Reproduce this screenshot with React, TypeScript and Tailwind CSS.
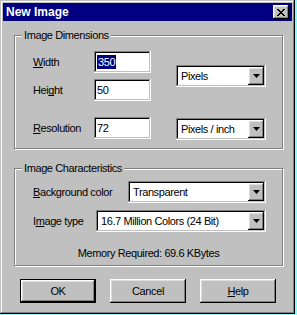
import React from "react";

const raised =
  "shadow-[inset_-1px_-1px_#000,inset_1px_1px_#fff,inset_-2px_-2px_#808080,inset_2px_2px_#dfdfdf]";
const sunken =
  "shadow-[inset_-1px_-1px_#fff,inset_1px_1px_#808080,inset_-2px_-2px_#c0c0c0,inset_2px_2px_#000]";

const Key = ({ children }: { children: React.ReactNode }) => (
  <span className="underline [text-decoration-skip-ink:none] underline-offset-[1px]">{children}</span>
);

const Field = ({ value, selected, width }: { value: string; selected?: boolean; width: string }) => (
  <div className={`${width} h-[22px] bg-white ${sunken} flex items-center pl-[3px]`}>
    {selected ? (
      <span className="bg-[#000080] text-white px-[1px] leading-[14px]">{value}</span>
    ) : (
      <span className="leading-[14px]">{value}</span>
    )}
  </div>
);

const Select = ({ value, width }: { value: string; width: string }) => (
  <div className={`${width} h-[22px] bg-white ${sunken} flex items-center p-[2px]`}>
    <span className="flex-1 pl-[3px] leading-[14px]">{value}</span>
    <div className={`w-[16px] h-[18px] bg-[#c0c0c0] ${raised} flex items-center justify-center`}>
      <svg width="7" height="4" viewBox="0 0 7 4">
        <polygon points="0,0 7,0 3.5,4" fill="#000" />
      </svg>
    </div>
  </div>
);

const Group = ({ title, height, children }: { title: string; height: string; children: React.ReactNode }) => (
  <div
    className={`relative ${height} border border-[#808080] shadow-[inset_1px_1px_#fff,1px_1px_#fff]`}
  >
    <span className="absolute -top-[8px] left-[7px] px-[2px] bg-[#c0c0c0] leading-[14px]">{title}</span>
    {children}
  </div>
);

const Button = ({ children, isDefault }: { children: React.ReactNode; isDefault?: boolean }) => (
  <div className={`w-[76px] h-[24px] ${isDefault ? "border border-black" : ""}`}>
    <div className={`w-full h-full ${raised} flex items-center justify-center`}>{children}</div>
  </div>
);

export default function App() {
  return (
    <div
      className="w-[297px] h-[315px] bg-[#80ffff] text-[11px] tracking-[-0.4px] text-black"
      style={{ fontFamily: '"Liberation Sans", Arial, sans-serif' }}
    >
      <div className="w-[295px] h-[314px] bg-[#c0c0c0] p-[3px] flex flex-col shadow-[inset_-1px_-1px_#000,inset_1px_1px_#c0c0c0,inset_-2px_-2px_#808080,inset_2px_2px_#fff]">
        {/* title bar */}
        <div className="h-[18px] bg-[#000080] flex items-center justify-between pl-[3px] pr-[3px]">
          <span className="text-white font-bold text-[12px] tracking-normal">New Image</span>
          <div className={`w-[16px] h-[14px] bg-[#c0c0c0] ${raised} flex items-center justify-center`}>
            <svg width="8" height="7" viewBox="0 0 8 7" shapeRendering="crispEdges">
              <path
                d="M0 0h2v1h1v1h2v-1h1v-1h2v1h-1v1h-1v1h-1v1h1v1h1v1h1v1h-2v-1h-1v-1h-2v1h-1v1h-2v-1h1v-1h1v-1h1v-1h-1v-1h-1v-1h-1z"
                fill="#000"
              />
            </svg>
          </div>
        </div>

        <div className="flex flex-col pl-[11px] pr-[9px] pt-[14px]">
          <Group title="Image Dimensions" height="h-[114px]">
            <div className="flex flex-col pt-[15px] pl-[18px]">
              <div className="flex items-center">
                <div className="flex flex-col gap-[6px]">
                  <div className="flex items-center">
                    <span className="w-[61px]">
                      <Key>W</Key>idth
                    </span>
                    <Field value="350" selected width="w-[57px]" />
                  </div>
                  <div className="flex items-center">
                    <span className="w-[61px]">
                      Hei<Key>g</Key>ht
                    </span>
                    <Field value="50" width="w-[57px]" />
                  </div>
                </div>
                <div className="ml-[25px]">
                  <Select value="Pixels" width="w-[90px]" />
                </div>
              </div>
              <div className="flex items-center mt-[15px]">
                <span className="w-[61px]">
                  <Key>R</Key>esolution
                </span>
                <Field value="72" width="w-[57px]" />
                <div className="ml-[25px] mt-[2px]">
                  <Select value="Pixels / inch" width="w-[90px]" />
                </div>
              </div>
            </div>
          </Group>

          <div className="mt-[19px]">
            <Group title="Image Characteristics" height="h-[98px]">
              <div className="flex flex-col pt-[12px] pl-[18px]">
                <div className="flex items-center">
                  <span className="w-[95px]">
                    <Key>B</Key>ackground color
                  </span>
                  <Select value="Transparent" width="w-[138px]" />
                </div>
                <div className="flex items-center mt-[7px]">
                  <span className="w-[63px]">
                    I<Key>m</Key>age type
                  </span>
                  <Select value="16.7 Million Colors (24 Bit)" width="w-[170px]" />
                </div>
                <div className="mt-[14px] pr-[18px] text-center leading-[14px]">Memory Required: 69.6 KBytes</div>
              </div>
            </Group>
          </div>

          <div className="flex gap-[14px] mt-[13px] pl-[6px]">
            <Button isDefault>OK</Button>
            <Button>Cancel</Button>
            <Button>
              <span>
                <Key>H</Key>elp
              </span>
            </Button>
          </div>
        </div>
      </div>
    </div>
  );
}
